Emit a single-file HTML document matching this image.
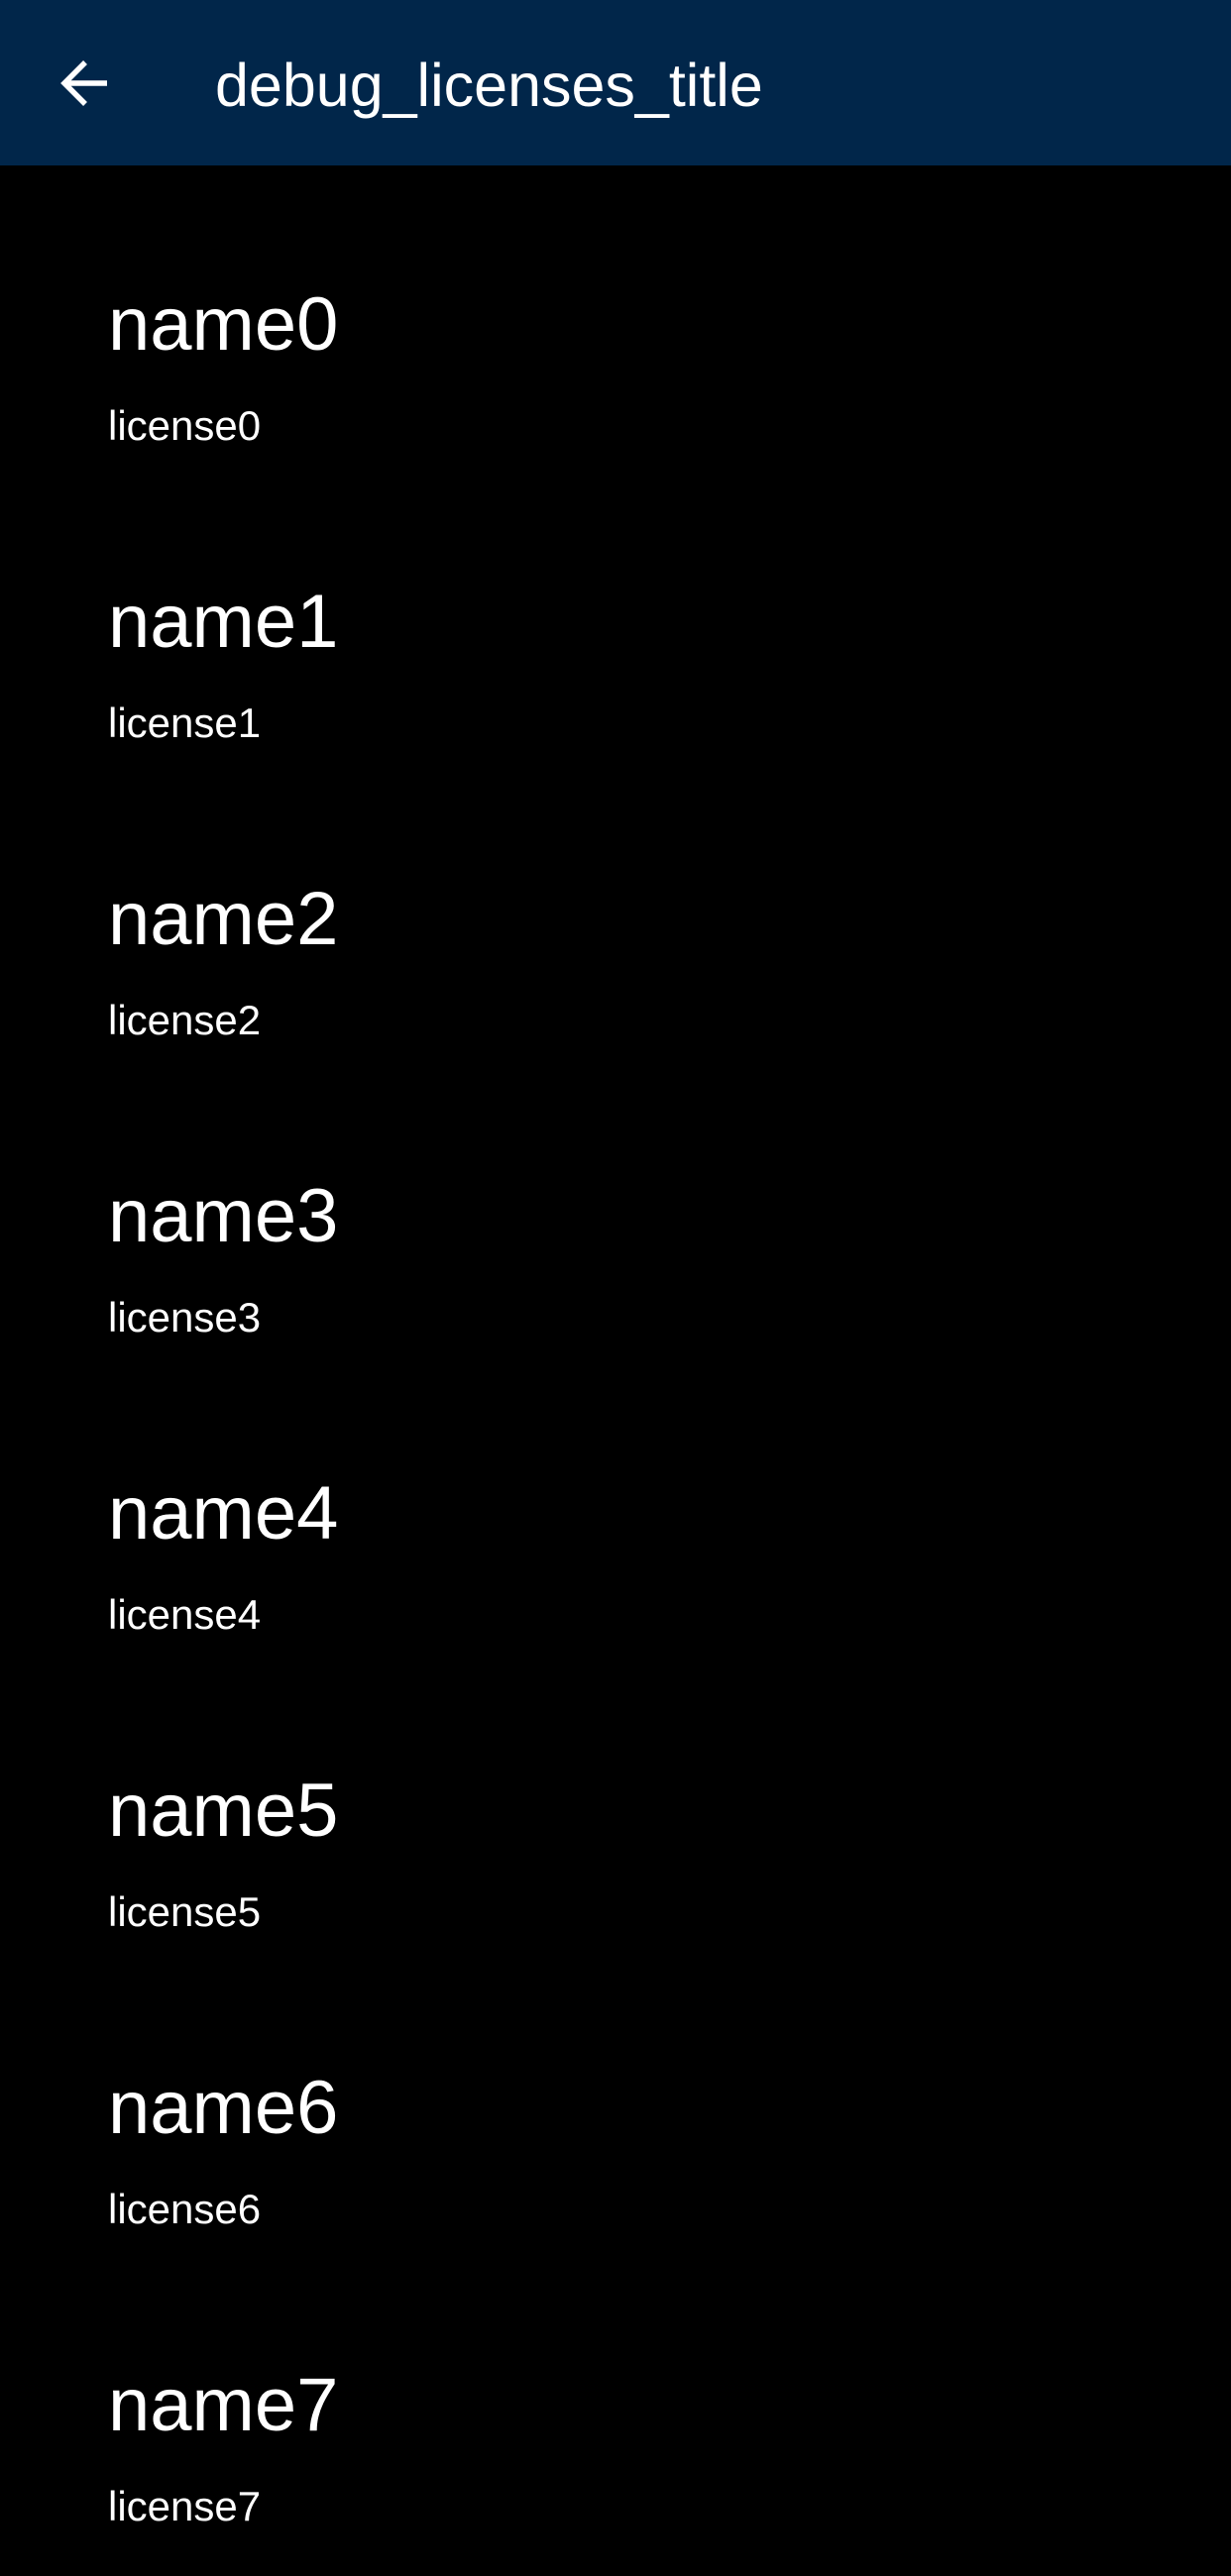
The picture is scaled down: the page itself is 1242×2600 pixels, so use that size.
<!DOCTYPE html>
<html><head><meta charset="utf-8"><style>
html,body{margin:0;padding:0;background:#000;width:1242px;height:2600px;overflow:hidden;font-family:"Liberation Sans",sans-serif;color:#fff}
.hdr{position:absolute;left:0;top:0;width:1242px;height:167px;background:#01264a}
.title{position:absolute;left:217px;top:0;font-size:61px;line-height:1;}
.n{position:absolute;left:109px;font-size:76px;line-height:1}
.l{position:absolute;left:109px;font-size:42px;line-height:1}
</style></head><body>
<div class="hdr">
<svg style="position:absolute;left:0;top:0" width="200" height="167"><path d="M108 84H67M86 63L65 84L86 105" stroke="#fff" stroke-width="5.5" fill="none"/></svg>
<div class="title" style="top:56px">debug_licenses_title</div>
</div>
<div class="n" style="top:290px">name0</div><div class="l" style="top:409px">license0</div>
<div class="n" style="top:590px">name1</div><div class="l" style="top:709px">license1</div>
<div class="n" style="top:890px">name2</div><div class="l" style="top:1009px">license2</div>
<div class="n" style="top:1190px">name3</div><div class="l" style="top:1309px">license3</div>
<div class="n" style="top:1490px">name4</div><div class="l" style="top:1609px">license4</div>
<div class="n" style="top:1790px">name5</div><div class="l" style="top:1909px">license5</div>
<div class="n" style="top:2090px">name6</div><div class="l" style="top:2209px">license6</div>
<div class="n" style="top:2390px">name7</div><div class="l" style="top:2509px">license7</div>
</body></html>
